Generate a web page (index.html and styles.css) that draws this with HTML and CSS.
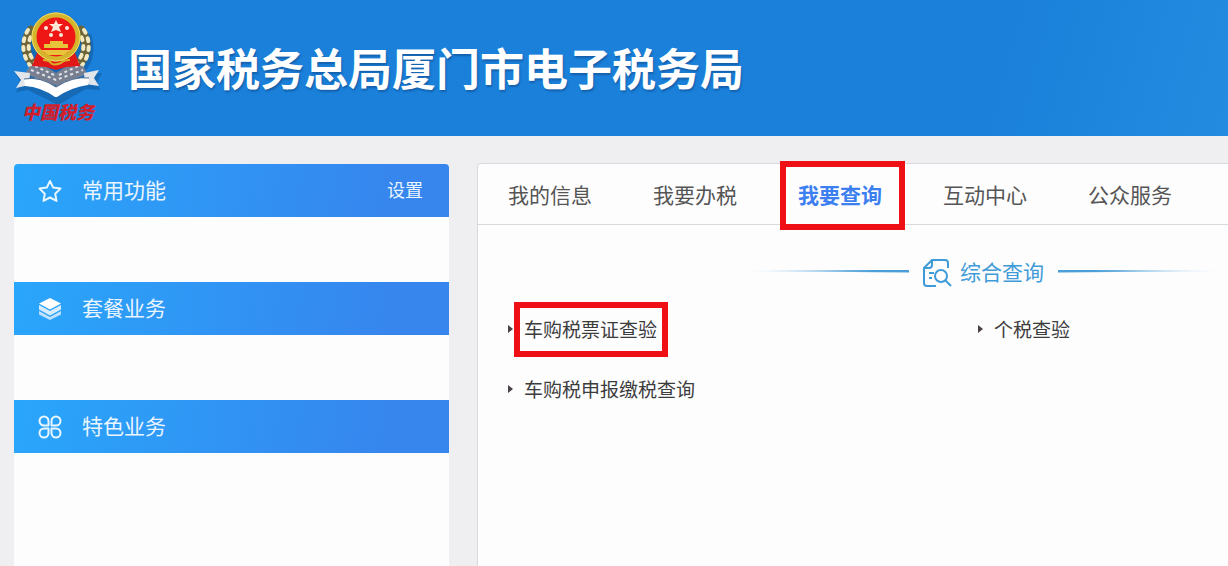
FILE: index.html
```html
<!DOCTYPE html>
<html lang="zh-CN">
<head>
<meta charset="utf-8">
<meta name="viewport" content="width=device-width, initial-scale=1">
<title>国家税务总局厦门市电子税务局</title>
<link rel="stylesheet" href="styles.css">
</head>
<body>
<header class="site-header">
  <div class="brand">
    <svg class="emblem" viewBox="0 0 92 90" aria-hidden="true">
      <g class="emblem-shadow" transform="translate(2 3)">
        <path d="M2 60l14 0 28 12 30-12 14-1-5 9 3 8-14-1-28 16-30-15-12 2 5-9z"/>
        <path d="M12 20q-8 28 14 46h36q24-18 15-46z"/>
      </g>
      <g fill="none" stroke-linecap="round">
        <path stroke="#6d6437" stroke-width="9" d="M19 19C10 32 13 50 29 60M69 19c9 13 6 31-10 41"/>
        <path stroke="#f2e9c2" stroke-width="4" stroke-dasharray="3 6" d="M16 19C7 33 11 52 27 63M72 19c9 14 5 33-11 44"/>
        <path stroke="#f2e9c2" stroke-width="4" stroke-dasharray="3 6" stroke-dashoffset="4" d="M21 22C13 33 16 49 31 58M67 22c8 11 5 27-10 36"/>
      </g>
      <path fill="#777f91" d="M17 56l10-5 17 11 17-11 11 5 3 7-30 12-32-12z"/>
      <path fill="none" stroke="#e1e3e6" stroke-width="2" stroke-dasharray="3 3" d="M19 59l25 10 27-10M23 55l19 9M66 55l-19 9"/>
      <path fill="#e21818" d="M25 42h38l5 13-14 1-10 3-10-3-14-1z"/>
      <circle cx="44" cy="26" r="22" fill="#ee1715" stroke="#d5b52c" stroke-width="5"/>
      <circle cx="44" cy="26" r="24" fill="none" stroke="#f0dc69"/>
      <path fill="#e7c439" d="M38 30h13v3h5v4H32v-4h6zM29 39h30l-7 5H36z"/>
      <path fill="none" stroke="#d8af25" stroke-width="2" d="M31 49q6 0 8 3t10 0q2-3 9-3"/>
      <g fill="#ffe9d5">
        <path d="M44 9l2 4 5 0-4 3 2 5-5-2-5 2 2-5-4-3 5 0z"/>
        <circle cx="34" cy="17" r="2"/><circle cx="55" cy="17" r="2"/>
        <circle cx="39" cy="24" r="2"/><circle cx="49" cy="24" r="2"/>
      </g>
      <path fill="#e2e5ea" d="M2 60l16 2-1 12-13 3 5-8zM87 59l-15 3 1 11 14 2-5-8z"/>
      <path fill="#fff" d="M12 68q16-3 32 8 17-11 33-9l-1 7q-16 2-31 12h-2q-14-10-30-11z"/>
      <path fill="none" stroke="#4d6c91" d="M12 68q16-3 32 8 17-11 33-9"/>
    </svg>
    <span class="emblem-caption">中国税务</span>
  </div>
  <h1 class="site-title">国家税务总局厦门市电子税务局</h1>
</header>

<main class="workspace">
  <aside class="sidebar">
    <section class="group">
      <div class="group-head">
        <svg class="group-icon" viewBox="0 0 24 24" aria-hidden="true"><path class="line" d="M12 2l3.200 6.600 7.300 1-5.300 5.100 1.300 7.200-6.500-3.400-6.500 3.400 1.300-7.200L1.500 9.600l7.300-1z"/></svg>
        <h2 class="group-title">常用功能</h2>
        <button class="group-action" type="button">设置</button>
      </div>
    </section>
    <section class="group">
      <div class="group-head">
        <svg class="group-icon" viewBox="0 0 24 24" aria-hidden="true"><path fill="#fff" d="M12 1l11 5.500-11 6-11-6z"/><path fill="#d7edff" d="M1 8l11 6 11-6v4.500l-11 6-11-6z"/><path fill="#c0e1ff" d="M1 14l11 6 11-6v3.500L12 23 1 17.500z"/></svg>
        <h2 class="group-title">套餐业务</h2>
      </div>
    </section>
    <section class="group">
      <div class="group-head">
        <svg class="group-icon" viewBox="0 0 24 24" aria-hidden="true"><path class="line" d="M10.500 10.500H6A4.500 4.500 0 1 1 10.500 6zM13.500 10.500V6A4.500 4.500 0 1 1 18 10.500zM10.500 13.500V18A4.500 4.500 0 1 1 6 13.500zM13.500 13.500H18A4.500 4.500 0 1 1 13.500 18z"/></svg>
        <h2 class="group-title">特色业务</h2>
      </div>
    </section>
  </aside>

  <section class="panel">
    <nav class="tabs">
      <a class="tab" href="#info">我的信息</a>
      <a class="tab" href="#tax">我要办税</a>
      <a class="tab tab-active" href="#query" aria-current="page">我要查询</a>
      <a class="tab" href="#interact">互动中心</a>
      <a class="tab" href="#service">公众服务</a>
    </nav>
    <div class="section-head">
      <span class="rule rule-left"></span>
      <svg class="section-icon" viewBox="0 0 30 30" aria-hidden="true"><path d="M26 10V5q0-3-3-3H10L2 10v15q0 3 3 3h9M2 10h5q3 0 3-3V2M7 15h5M7 20h3"/><circle cx="19" cy="18" r="6"/><path d="M23.500 22.500L29 28"/></svg>
      <h2 class="section-title">综合查询</h2>
      <span class="rule rule-right"></span>
    </div>
    <ul class="links">
      <li class="entry"><a class="entry-link entry-marked" href="#voucher">车购税票证查验</a></li>
      <li class="entry"><a class="entry-link" href="#income">个税查验</a></li>
      <li class="entry"><a class="entry-link" href="#declare">车购税申报缴税查询</a></li>
    </ul>
  </section>
</main>
</body>
</html>
```
FILE: styles.css
```css
* { box-sizing: border-box; }

body {
  display: flex;
  flex-direction: column;
  min-height: 100vh;
  margin: 0;
  overflow-x: hidden;
  background: #efeff1;
  color: #444;
  font-family: "Noto Sans CJK SC", sans-serif;
}

h1, h2, ul { margin: 0; padding: 0; }
a { color: inherit; text-decoration: none; }

.site-header {
  display: flex;
  align-items: flex-start;
  gap: 24px;
  height: 136px;
  padding: 11px 12px 0;
  background: linear-gradient(105deg, #1a80da 0%, #1a80da 80%, #238ce0 100%);
}

.brand {
  display: flex;
  flex-direction: column;
  align-items: center;
  width: 92px;
}
.emblem { width: 92px; height: 90px; overflow: visible; }
.emblem-shadow { fill: #125a9d; opacity: 0.6; }
.emblem-caption {
  color: #d21d2b;
  font-size: 18px;
  font-style: italic;
  font-weight: 900;
  line-height: 20px;
}

.site-title {
  padding-top: 24px;
  color: #fff;
  font-size: 44px;
  font-weight: 700;
  line-height: 64px;
  white-space: nowrap;
  text-shadow: 1px 2px 2px #1560ac;
}

.workspace {
  display: flex;
  flex: 1;
  gap: 28px;
  padding: 27px 0 0 14px;
}

.sidebar {
  flex: 0 0 435px;
  margin-top: 1px;
  border-radius: 4px 4px 0 0;
  background: #fdfdfe;
  overflow: hidden;
}
.group { padding-bottom: 65px; }
.group-head {
  display: flex;
  align-items: center;
  height: 53px;
  padding: 0 26px 0 24px;
  background: linear-gradient(100deg, #29a6fb, #3686ee 85%);
  color: #eaf5ff;
}
.group-icon { width: 24px; height: 24px; margin-right: 20px; }
.line { fill: none; stroke: #e8f6ff; stroke-width: 2; stroke-linejoin: round; }
.group-title { padding-bottom: 4px; font-size: 21px; font-weight: 400; line-height: 30px; }
.group-action {
  margin-left: auto;
  padding: 0 0 4px;
  border: 0;
  background: none;
  color: inherit;
  font: inherit;
  font-size: 18px;
  cursor: pointer;
}

.panel {
  flex: 1;
  min-width: 0;
  border: 1px solid #d8d9dc;
  border-width: 1px 0 0 1px;
  border-radius: 4px 0 0 0;
  background: #fdfdfe;
}

.tabs {
  display: flex;
  align-items: center;
  gap: 61px;
  height: 61px;
  padding-left: 30px;
  border-bottom: 1px solid #d8d9dc;
  white-space: nowrap;
}
.tab { color: #555; font-size: 21px; line-height: 32px; }
.tab-active { position: relative; color: #3b7ff0; font-weight: 700; }
.tab-active::after,
.entry-marked::after {
  position: absolute;
  border: 6px solid #ee1014;
  content: "";
}
.tab-active::after { inset: -17px -23px -20px -18px; }

.section-head {
  display: flex;
  align-items: center;
  justify-content: flex-end;
  height: 30px;
  margin-top: 33px;
  color: #3f9bd7;
}
.section-icon {
  width: 30px;
  height: 30px;
  margin: 0 8px 0 13px;
  fill: none;
  stroke: currentColor;
  stroke-width: 2;
}
.section-title { margin-right: 14px; padding-bottom: 4px; font-size: 21px; font-weight: 400; line-height: 30px; }
.rule { width: 170px; height: 3px; margin-bottom: 4px; }
.rule-left { background: linear-gradient(90deg, transparent, #4a9fd8 80%); clip-path: polygon(0 50%, 100% 0, 100% 100%); }
.rule-right { background: linear-gradient(270deg, transparent, #4a9fd8 80%); clip-path: polygon(0 0, 100% 50%, 0 100%); }

.links {
  display: grid;
  grid-template-columns: 47fr 25fr;
  row-gap: 30px;
  padding: 26px 0 0 30px;
  list-style: none;
}
.entry { display: flex; align-items: center; gap: 11px; }
.entry::before {
  border: 4px solid transparent;
  border-left: 5px solid #4a4048;
  border-right: 0;
  content: "";
}
.entry-link { position: relative; color: #3c3c3c; font-size: 19px; line-height: 30px; }
.entry-marked::after { inset: -12px -11px -13px -10px; }
```
